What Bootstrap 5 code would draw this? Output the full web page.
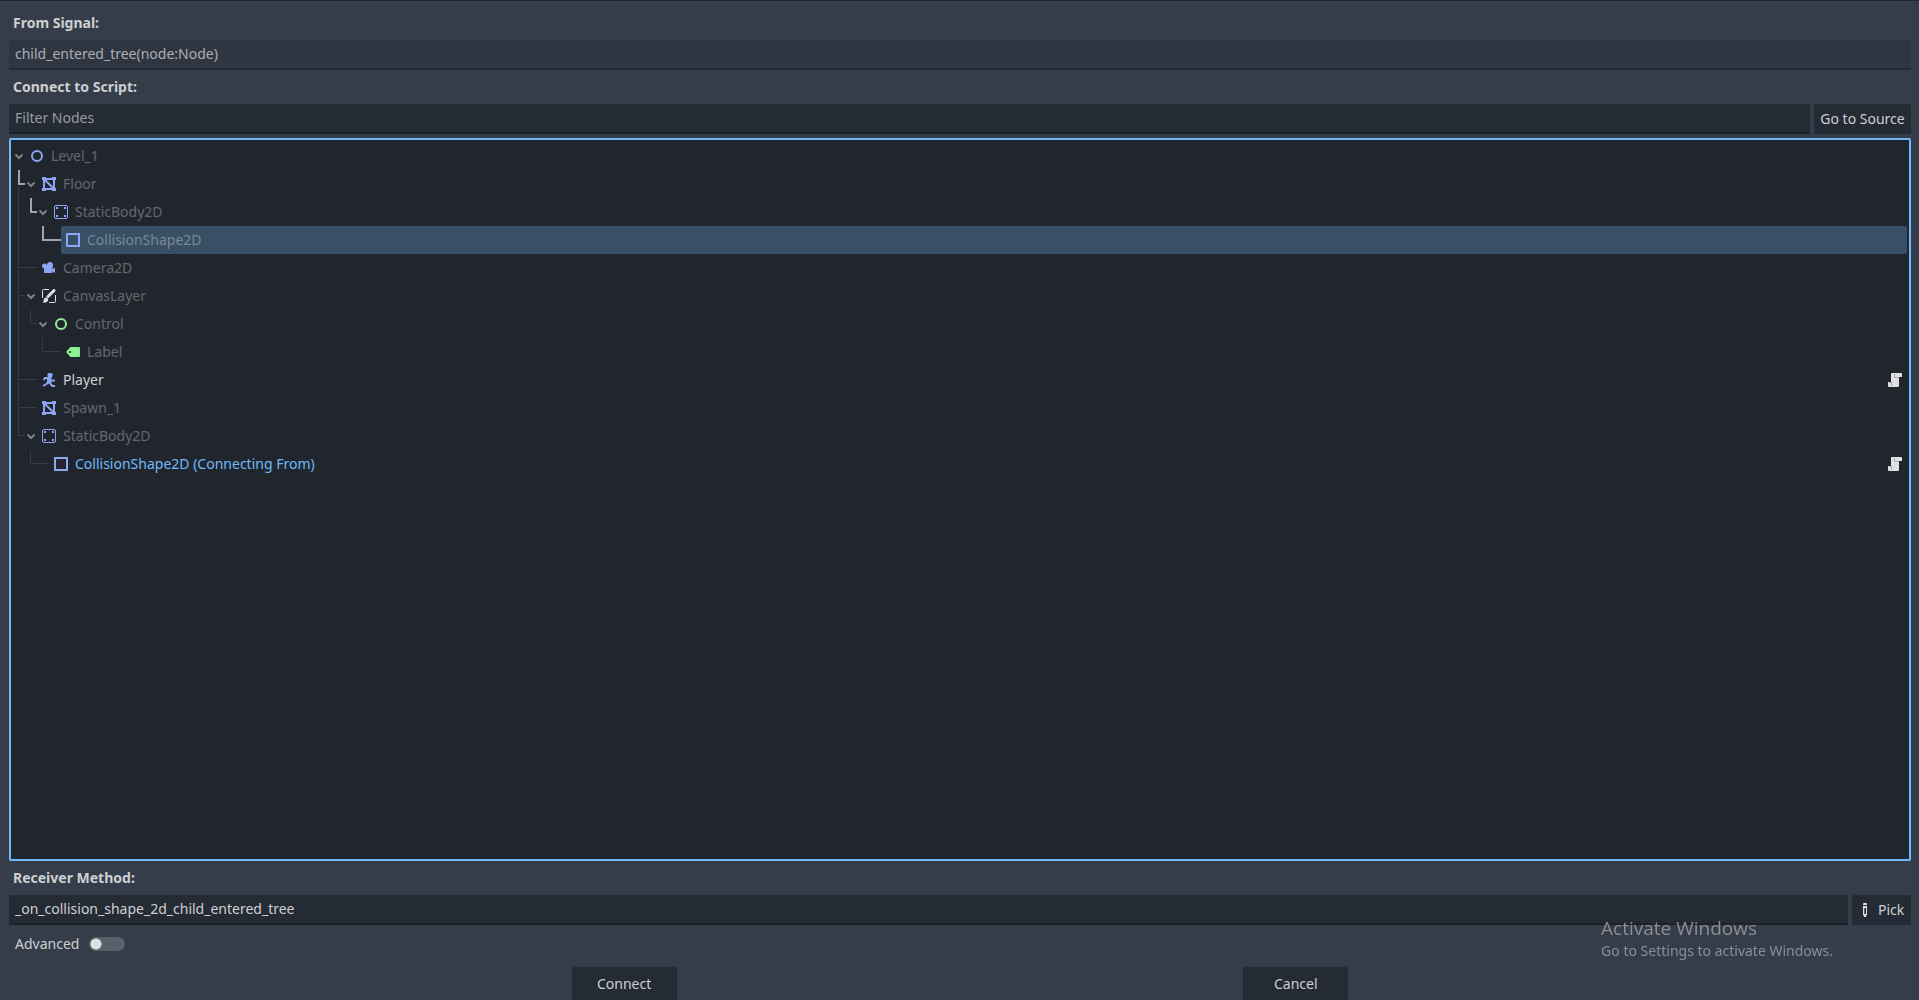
<!DOCTYPE html>
<html lang="en">
<head>
<meta charset="utf-8">
<meta name="viewport" content="width=device-width, initial-scale=1">
<title>Connect a Signal to a Method</title>
<link href="https://cdn.jsdelivr.net/npm/bootstrap@5.3.0/dist/css/bootstrap.min.css" rel="stylesheet">
<style>
body{font-family:"Noto Sans",sans-serif;font-size:14px;line-height:20px;background:#363d4a;color:#cdcfd2}
.dialog{border-top:1px solid #21262e;padding:9px 8px 0 9px}
.caption{font-weight:700;line-height:20px;padding:3px 4px 5px;height:28px;margin-bottom:2px;color:#cdcfd2}
.field{height:30px;padding:0 6px 2px;font-size:14px;line-height:20px;border:0;border-bottom:2px solid #1d2229;border-radius:2px 2px 0 0;background:#252b34;color:#cdcfd2}
.field:focus{background:#252b34;color:#cdcfd2;box-shadow:none;border-color:#1d2229}
.field::placeholder{color:#999ca0;opacity:1}
.field:read-only{background:#303641;color:#abaeb4;border-color:#252b34}
.tool{height:30px;padding:0 6px;font-size:14px;line-height:20px;border:0;border-radius:2px;background:#252b34;color:#cdcfd2}
.tool:hover{background:#2c333e;color:#fff}
.go-source{flex:0 0 97px}
.pick{flex:0 0 59px;gap:6px}
.action{width:105px;height:33px}
.scene-tree{border:2px solid #70bafa;border-radius:2px;background:#21262e;padding:2px 2px 2px 0;min-height:0}
.node-row{height:28px;color:#65686d}
.guide{flex:none;height:28px}
.thin{fill:none;stroke:#373c43}
.thick{fill:none;stroke:#a3a5a8;stroke-width:2}
.arrow{fill:none;stroke:#7e8186;stroke-width:2}
.node-item{padding:0 5px;gap:7px;border-radius:2px}
.node-item svg{flex:none}
.chosen{background:#384f65;color:#7b8895}
.usable{color:#cdcfd2}
.source{color:#70bafa}
.advanced{height:30px;padding-left:6px;gap:10px}
.switch-box{appearance:none;width:36px;height:14px;margin:0;border-radius:7px;background:radial-gradient(circle at 7px 7px,#e0e0e0 5px,transparent 6px),#59616a}
.switch-box:checked{background:radial-gradient(circle at 29px 7px,#e0e0e0 5px,transparent 6px),#70bafa}
.watermark{right:86px;bottom:39px;color:#8b8e93;pointer-events:none}
.watermark-title{font-family:"Open Sans",sans-serif;font-size:19px;line-height:26px}
.watermark-text{font-size:14px;line-height:20px}
</style>
<script src="https://cdn.jsdelivr.net/npm/bootstrap@5.3.0/dist/js/bootstrap.bundle.min.js"></script>
</head>
<body>
<svg width="0" height="0" class="position-absolute" aria-hidden="true">
<defs>
<symbol id="i-node2d" viewBox="0 0 14 14"><circle cx="7" cy="7" r="5" fill="none" stroke="#8da5f3" stroke-width="2"/></symbol>
<symbol id="i-control" viewBox="0 0 14 14"><circle cx="7" cy="7" r="5" fill="none" stroke="#8eef97" stroke-width="2"/></symbol>
<symbol id="i-poly" viewBox="0 0 14 14"><path d="M2 2H12V12H2ZM2 2 12 12" fill="none" stroke="#8da5f3" stroke-width="2"/><path d="M0 0h4v3H0zM10 0h4v3h-4zM0 11h4v3H0zM10 11h4v3h-4z" fill="#8da5f3"/></symbol>
<symbol id="i-body" viewBox="0 0 14 14"><rect x=".5" y=".5" width="13" height="13" rx="1.5" fill="none" stroke="#8da5f3"/><path d="M2 2h2v2H2zM10 2h2v2h-2zM2 10h2v2H2zM10 10h2v2h-2z" fill="#8da5f3"/></symbol>
<symbol id="i-shape" viewBox="0 0 14 14"><path d="M1 1H13V13H1Z" fill="none" stroke="#8da5f3" stroke-width="2"/></symbol>
<symbol id="i-camera" viewBox="0 0 14 14"><g fill="#8da5f3"><circle cx="2.500" cy="5" r="2.500"/><circle cx="8" cy="4" r="3"/><rect x="2" y="4" width="8.500" height="8" rx="1"/><path d="M9.500 9 13 6.500V12L9.500 10z"/></g></symbol>
<symbol id="i-canvas" viewBox="0 0 14 14"><path d="M7 .500H1.500a1 1 0 0 0-1 1V9M7 13.500h5.500a1 1 0 0 0 1-1V6" fill="none" stroke="#e0e0e0"/><path d="M12 1.500 6 7.500" fill="none" stroke="#e0e0e0" stroke-width="3" stroke-linecap="round"/><path d="M4 8.500a2.200 2.200 0 0 1 2 3C5.200 13.300 3.200 14 .800 13.600 1.600 12.900 1.500 12.200 1.700 11 1.900 9.500 2.800 8.600 4 8.500z" fill="#e0e0e0"/></symbol>
<symbol id="i-label" viewBox="0 0 14 14"><path fill="#8eef97" fill-rule="evenodd" d="M4.500 2 0 7l4.500 5H13a1 1 0 0 0 1-1V3a1 1 0 0 0-1-1zM4 6a1 1 0 1 1 0 2 1 1 0 0 1 0-2z"/></symbol>
<symbol id="i-player" viewBox="0 0 14 14"><rect x="5.500" y="0" width="5" height="4.500" rx="1.500" fill="#8da5f3"/><path d="M1.500 7 3 5H8M7 8 4.500 11 1 13M7 9 9 11.500 10.500 13H13M9 8.500 10.500 7.500 13 7.500" fill="none" stroke="#8da5f3" stroke-width="2"/><path d="M5 4h4.500V9L8 11 5 10z" fill="#8da5f3"/></symbol>
<symbol id="i-script" viewBox="0 0 14 14"><path fill="#e0e0e0" d="M4 0h9a1 1 0 0 1 1 1v3h-3v9a1 1 0 0 1-1 1H1a1 1 0 0 1-1-1V9h3V1a1 1 0 0 1 1-1z"/><path fill="none" stroke="#a9abad" d="M6.500 1v3.500H11M3.500 9v4M1 9.500h2"/></symbol>
<symbol id="i-pick" viewBox="0 0 14 14"><path fill="#e0e0e0" fill-rule="evenodd" d="M5 1a1 1 0 0 1 1-1h2a1 1 0 0 1 1 1v1H5zM5 3h4v9l-1 1v1H6v-1l-1-1zM6 5v6h2V5z"/><path fill="#a0a3a7" d="M6.500 5H7v6h-.5z"/></symbol>
</defs>
</svg>

<main class="dialog d-flex flex-column vh-100 overflow-hidden">
  <label class="caption" for="signal">From Signal:</label>
  <input id="signal" class="form-control field" type="text" value="child_entered_tree(node:Node)" readonly>
  <label class="caption mt-1" for="filter">Connect to Script:</label>
  <div class="d-flex gap-1 mb-1">
    <input id="filter" class="form-control field" type="text" placeholder="Filter Nodes">
    <button type="button" class="btn tool go-source text-nowrap">Go to Source</button>
  </div>

  <ul class="scene-tree list-unstyled flex-grow-1 mb-0" aria-label="Scene tree">
    <li class="node-row d-flex">
      <svg class="guide" width="14"><path class="arrow" d="M4.500 12.500 8 16 11.500 12.500"/></svg>
      <div class="node-item d-flex align-items-center flex-grow-1"><svg width="14" height="14"><use href="#i-node2d"/></svg><span>Level_1</span></div>
    </li>
    <li class="node-row d-flex">
      <svg class="guide" width="26"><path class="thin" d="M7.500 17V28"/><path class="thick" d="M8 0V14H14"/><path class="arrow" d="M16.500 12.500 20 16 23.500 12.500"/></svg>
      <div class="node-item d-flex align-items-center flex-grow-1"><svg width="14" height="14"><use href="#i-poly"/></svg><span>Floor</span></div>
    </li>
    <li class="node-row d-flex">
      <svg class="guide" width="38"><path class="thin" d="M7.500 0V28"/><path class="thick" d="M20 0V14H26"/><path class="arrow" d="M28.500 12.500 32 16 35.500 12.500"/></svg>
      <div class="node-item d-flex align-items-center flex-grow-1"><svg width="14" height="14"><use href="#i-body"/></svg><span>StaticBody2D</span></div>
    </li>
    <li class="node-row d-flex">
      <svg class="guide" width="50"><path class="thin" d="M7.500 0V28"/><path class="thick" d="M32 0V14H50"/></svg>
      <div class="node-item chosen d-flex align-items-center flex-grow-1"><svg width="14" height="14"><use href="#i-shape"/></svg><span>CollisionShape2D</span></div>
    </li>
    <li class="node-row d-flex">
      <svg class="guide" width="26"><path class="thin" d="M7.500 0V28M7.500 13.500H26"/></svg>
      <div class="node-item d-flex align-items-center flex-grow-1"><svg width="14" height="14"><use href="#i-camera"/></svg><span>Camera2D</span></div>
    </li>
    <li class="node-row d-flex">
      <svg class="guide" width="26"><path class="thin" d="M7.500 0V28M7.500 13.500H14"/><path class="arrow" d="M16.500 12.500 20 16 23.500 12.500"/></svg>
      <div class="node-item d-flex align-items-center flex-grow-1"><svg width="14" height="14"><use href="#i-canvas"/></svg><span>CanvasLayer</span></div>
    </li>
    <li class="node-row d-flex">
      <svg class="guide" width="38"><path class="thin" d="M7.500 0V28M19.500 0V13.500H26"/><path class="arrow" d="M28.500 12.500 32 16 35.500 12.500"/></svg>
      <div class="node-item d-flex align-items-center flex-grow-1"><svg width="14" height="14"><use href="#i-control"/></svg><span>Control</span></div>
    </li>
    <li class="node-row d-flex">
      <svg class="guide" width="50"><path class="thin" d="M7.500 0V28M31.500 0V13.500H50"/></svg>
      <div class="node-item d-flex align-items-center flex-grow-1"><svg width="14" height="14"><use href="#i-label"/></svg><span>Label</span></div>
    </li>
    <li class="node-row d-flex">
      <svg class="guide" width="26"><path class="thin" d="M7.500 0V28M7.500 13.500H26"/></svg>
      <div class="node-item usable d-flex align-items-center flex-grow-1"><svg width="14" height="14"><use href="#i-player"/></svg><span>Player</span><svg class="ms-auto" width="14" height="14"><use href="#i-script"/></svg></div>
    </li>
    <li class="node-row d-flex">
      <svg class="guide" width="26"><path class="thin" d="M7.500 0V28M7.500 13.500H26"/></svg>
      <div class="node-item d-flex align-items-center flex-grow-1"><svg width="14" height="14"><use href="#i-poly"/></svg><span>Spawn_1</span></div>
    </li>
    <li class="node-row d-flex">
      <svg class="guide" width="26"><path class="thin" d="M7.500 0V13.500H14"/><path class="arrow" d="M16.500 12.500 20 16 23.500 12.500"/></svg>
      <div class="node-item d-flex align-items-center flex-grow-1"><svg width="14" height="14"><use href="#i-body"/></svg><span>StaticBody2D</span></div>
    </li>
    <li class="node-row d-flex">
      <svg class="guide" width="38"><path class="thin" d="M19.500 0V13.500H38"/></svg>
      <div class="node-item source d-flex align-items-center flex-grow-1"><svg width="14" height="14"><use href="#i-shape"/></svg><span>CollisionShape2D (Connecting From)</span><svg class="ms-auto" width="14" height="14"><use href="#i-script"/></svg></div>
    </li>
  </ul>

  <label class="caption mt-1" for="method">Receiver Method:</label>
  <div class="d-flex gap-1 mb-1">
    <input id="method" class="form-control field" type="text" value="_on_collision_shape_2d_child_entered_tree">
    <button type="button" class="btn tool pick d-flex align-items-center"><svg width="14" height="14"><use href="#i-pick"/></svg>Pick</button>
  </div>
  <div class="advanced d-flex align-items-center">
    <label for="advanced">Advanced</label>
    <input id="advanced" class="switch-box" type="checkbox" role="switch">
  </div>
  <div class="d-flex justify-content-evenly gap-1 mt-2">
    <button type="button" class="btn tool action">Connect</button>
    <button type="button" class="btn tool action">Cancel</button>
  </div>
</main>
<div class="watermark position-fixed">
  <div class="watermark-title">Activate Windows</div>
  <div class="watermark-text">Go to Settings to activate Windows.</div>
</div>
</body>
</html>
